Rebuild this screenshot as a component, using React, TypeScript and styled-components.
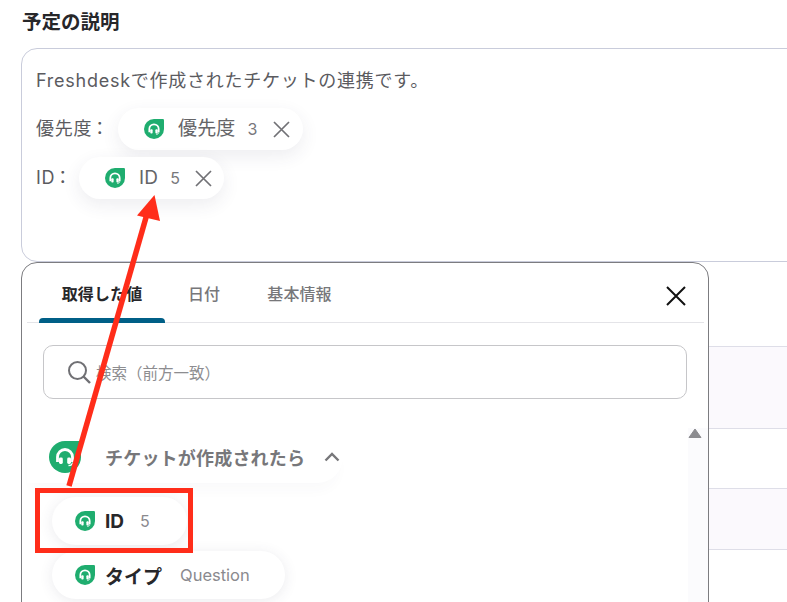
import React from "react";
import styled, { createGlobalStyle } from "styled-components";

const Global = createGlobalStyle`
  html, body { margin: 0; padding: 0; background: #fff; }
  body { width: 787px; height: 602px; overflow: hidden; font-family: Inter, "Noto Sans CJK JP", sans-serif; }
`;

const Page = styled.div`
  position: relative;
  width: 787px;
  height: 602px;
  overflow: hidden;
  padding: 9px 0 0 21px;
  box-sizing: border-box;
`;
const Title = styled.h2`
  margin: 0 0 13px 1px;
  font-size: 19.5px;
  line-height: 26px;
  font-weight: 700;
  color: #27272a;
`;
const Editor = styled.div`
  width: 800px;
  height: 214px;
  box-sizing: border-box;
  border: 1px solid #c9ccdb;
  border-radius: 16px;
  padding: 19px 14px 0;
  color: #5b5b5f;
  font-size: 18px;
  letter-spacing: 0.75px;
`;
const Line = styled.div`
  line-height: 26px;
  white-space: nowrap;
`;
const FieldRow = styled.div`
  display: flex;
  align-items: center;
  height: 42px;
  margin-top: 7px;
  white-space: nowrap;
  line-height: 24px;
  &:nth-child(2) {
    margin-top: 14px;
  }
`;
const FieldLabel = styled.span<{ $w: number }>`
  flex: none;
  display: flex;
  align-items: center;
  gap: 3px;
  width: ${(p) => p.$w}px;
  margin-top: -1px;
`;
const Colon = styled.span`
  font-feature-settings: "palt";
  letter-spacing: 0;
`;
const Chip = styled.div<{ $w: number }>`
  display: flex;
  align-items: center;
  flex: none;
  width: ${(p) => p.$w}px;
  height: 42px;
  box-sizing: border-box;
  padding-left: 26px;
  background: #fff;
  border-radius: 21px;
  box-shadow: 0 6px 18px rgba(60, 60, 90, 0.09);
  color: #666;
  font-size: 19px;
  letter-spacing: 0.15px;
`;
const ChipName = styled.span`
  margin-left: 14px;
  color: #656568;
`;
const ChipValue = styled.span`
  margin-left: 12px;
  font-size: 16px;
  color: #77777b;
`;
const ChipClose = styled.svg`
  margin-left: 15px;
  flex: none;
`;
const Lower = styled.div`
  display: flex;
  align-items: flex-start;
  margin-top: 0;
`;
const Panel = styled.div`
  position: relative;
  flex: none;
  width: 688px;
  height: 400px;
  box-sizing: border-box;
  border: 1px solid #7c7c80;
  border-radius: 16px 16px 0 0;
  background: #fff;
`;
const Tabs = styled.div`
  display: flex;
  height: 59px;
  margin: 0 4px 0 5px;
  padding-left: 12px;
  border-bottom: 1px solid #e4e4e8;
`;
const Tab = styled.div<{ $active?: boolean; $w: number }>`
  position: relative;
  width: ${(p) => p.$w}px;
  text-align: center;
  font-size: 16px;
  letter-spacing: 0.1px;
  line-height: 22px;
  padding-top: 20px;
  font-weight: ${(p) => (p.$active ? 700 : 500)};
  color: ${(p) => (p.$active ? "#27272a" : "#77777a")};
  white-space: nowrap;
  &::after {
    content: "";
    display: ${(p) => (p.$active ? "block" : "none")};
    position: absolute;
    left: 0;
    right: 0;
    bottom: -1px;
    height: 5px;
    border-radius: 4px 4px 0 0;
    background: #005f87;
  }
`;
const CloseBtn = styled.svg`
  position: absolute;
  right: 22px;
  top: 23px;
`;
const Search = styled.div`
  display: flex;
  align-items: center;
  margin: 22px 21px 0;
  height: 54px;
  box-sizing: border-box;
  border: 1px solid #c6c6c9;
  border-radius: 10px;
  padding-left: 23px;
  color: #8d8d90;
  font-size: 15.5px;
`;
const SearchIcon = styled.svg`
  flex: none;
  margin-right: 5px;
`;
const Section = styled.div`
  display: flex;
  align-items: center;
  width: 316px;
  height: 52px;
  margin: 32px 0 0 5px;
  padding-left: 22px;
  box-sizing: border-box;
  border-radius: 0 26px 26px 0;
  background: #fff;
  box-shadow: 0 12px 14px -6px rgba(60, 60, 90, 0.03);
  color: #77777a;
  font-size: 18px;
  letter-spacing: 0.2px;
  font-weight: 700;
  white-space: nowrap;
`;
const SectionText = styled.span`
  margin-left: 24px;
`;
const SectionChevron = styled.svg`
  margin-left: 19px;
  flex: none;
`;
const Items = styled.div`
  display: flex;
  flex-direction: column;
  gap: 6px;
  margin: 14px 0 0 30px;
`;
const Item = styled.div<{ $w: number }>`
  display: flex;
  align-items: center;
  width: ${(p) => p.$w}px;
  height: 48px;
  box-sizing: border-box;
  padding-left: 23px;
  border-radius: 24px;
  background: #fff;
  box-shadow: 0 2px 14px rgba(60, 60, 90, 0.1);
`;
const ItemName = styled.span`
  margin-left: 10px;
  color: #27272a;
  font-size: 19px;
  font-weight: 700;
`;
const ItemValue = styled.span<{ $gap: number; $size: number }>`
  margin-left: ${(p) => p.$gap}px;
  color: #8a8a8e;
  font-size: ${(p) => p.$size}px;
`;
const ScrollTrack = styled.div`
  position: absolute;
  right: 0;
  top: 165px;
  bottom: 0;
  width: 20px;
  background: #fbfbfd;
`;
const ScrollUp = styled.svg`
  position: absolute;
  left: 0;
  top: 0;
`;
const BackRows = styled.div`
  flex: none;
  width: 90px;
  padding-top: 84px;
`;
const BackRow = styled.div<{ $h: number; $fill?: boolean }>`
  height: ${(p) => p.$h}px;
  box-sizing: border-box;
  border-top: 1px solid #dedee8;
  background: ${(p) => (p.$fill ? "#fbf9fd" : "#fff")};
`;
const Overlay = styled.svg`
  position: absolute;
  left: 0;
  top: 0;
  pointer-events: none;
`;

function AppIcon({ size }: { size: number }) {
  return (
    <svg width={size} height={size} viewBox="0 0 32 32" style={{ flex: "none" }}>
      <path d="M16 0H30a2 2 0 0 1 2 2V16A16 16 0 1 1 16 0Z" fill="#1fad6f" />
      <path
        d="M8.500 21v-5a7.500 7.500 0 0 1 15 0v5"
        fill="none"
        stroke="#fff"
        strokeWidth="2.800"
      />
      <rect x="10" y="16.500" width="3.800" height="6.500" rx="1.400" fill="#fff" />
      <rect x="18.200" y="16.500" width="3.800" height="6.500" rx="1.400" fill="#fff" />
      <path d="M23.500 21.500c0 2-1.500 3-4 3" fill="none" stroke="#fff" strokeWidth="1.400" />
    </svg>
  );
}

function XIcon() {
  return (
    <ChipClose width="17" height="17" viewBox="0 0 17 17">
      <path d="M1 1 16 16M16 1 1 16" stroke="#717175" strokeWidth="1.700" fill="none" />
    </ChipClose>
  );
}

export default function App() {
  return (
    <>
      <Global />
      <Page>
        <Title>予定の説明</Title>
        <Editor>
          <Line>Freshdeskで作成されたチケットの連携です。</Line>
          <FieldRow>
            <FieldLabel $w={82}>
              <span>優先度</span>
              <Colon>：</Colon>
            </FieldLabel>
            <Chip $w={185}>
              <AppIcon size={20} />
              <ChipName>優先度</ChipName>
              <ChipValue>3</ChipValue>
              <XIcon />
            </Chip>
          </FieldRow>
          <FieldRow>
            <FieldLabel $w={43}>
              <span>ID</span>
              <Colon>：</Colon>
            </FieldLabel>
            <Chip $w={145}>
              <AppIcon size={20} />
              <ChipName>ID</ChipName>
              <ChipValue>5</ChipValue>
              <XIcon />
            </Chip>
          </FieldRow>
        </Editor>
        <Lower>
          <Panel>
            <Tabs>
              <Tab $active $w={126}>取得した値</Tab>
              <Tab $w={78}>日付</Tab>
              <Tab $w={113}>基本情報</Tab>
            </Tabs>
            <CloseBtn width="20" height="20" viewBox="0 0 20 20">
              <path d="M1 1 19 19M19 1 1 19" stroke="#111" strokeWidth="2" fill="none" />
            </CloseBtn>
            <Search>
              <SearchIcon width="24" height="24" viewBox="0 0 24 24">
                <circle cx="10.500" cy="10.500" r="8.500" fill="none" stroke="#707074" strokeWidth="2" />
                <path d="M16.500 16.500 23 23" stroke="#707074" strokeWidth="2.400" fill="none" />
              </SearchIcon>
              検索（前方一致）
            </Search>
            <Section>
              <AppIcon size={32} />
              <SectionText>チケットが作成されたら</SectionText>
              <SectionChevron width="16" height="10" viewBox="0 0 16 10">
                <path d="M1.500 8.500 8 2l6.500 6.500" stroke="#77777a" strokeWidth="2.400" fill="none" />
              </SectionChevron>
            </Section>
            <Items>
              <Item $w={135}>
                <AppIcon size={20} />
                <ItemName>ID</ItemName>
                <ItemValue $gap={16} $size={16}>5</ItemValue>
              </Item>
              <Item $w={233}>
                <AppIcon size={20} />
                <ItemName>タイプ</ItemName>
                <ItemValue $gap={18} $size={16.5}>Question</ItemValue>
              </Item>
            </Items>
            <ScrollTrack>
              <ScrollUp width="14" height="11" viewBox="0 0 14 11">
                <path d="M7 1 13 9.500H1Z" fill="#8c8c90" stroke="#8c8c90" strokeLinejoin="round" />
              </ScrollUp>
            </ScrollTrack>
          </Panel>
          <BackRows>
            <BackRow $h={82} $fill />
            <BackRow $h={60} />
            <BackRow $h={61} $fill />
            <BackRow $h={20} />
          </BackRows>
        </Lower>
        <Overlay width="787" height="602" viewBox="0 0 787 602">
          <rect x="37.500" y="490.500" width="153" height="60" fill="none" stroke="#ff2d1a" strokeWidth="5" />
          <path d="M69 486 147 214" stroke="#ff2d1a" strokeWidth="5.500" fill="none" />
          <path d="M154.500 195 137 215.500 160 221Z" fill="#ff2d1a" />
        </Overlay>
      </Page>
    </>
  );
}
